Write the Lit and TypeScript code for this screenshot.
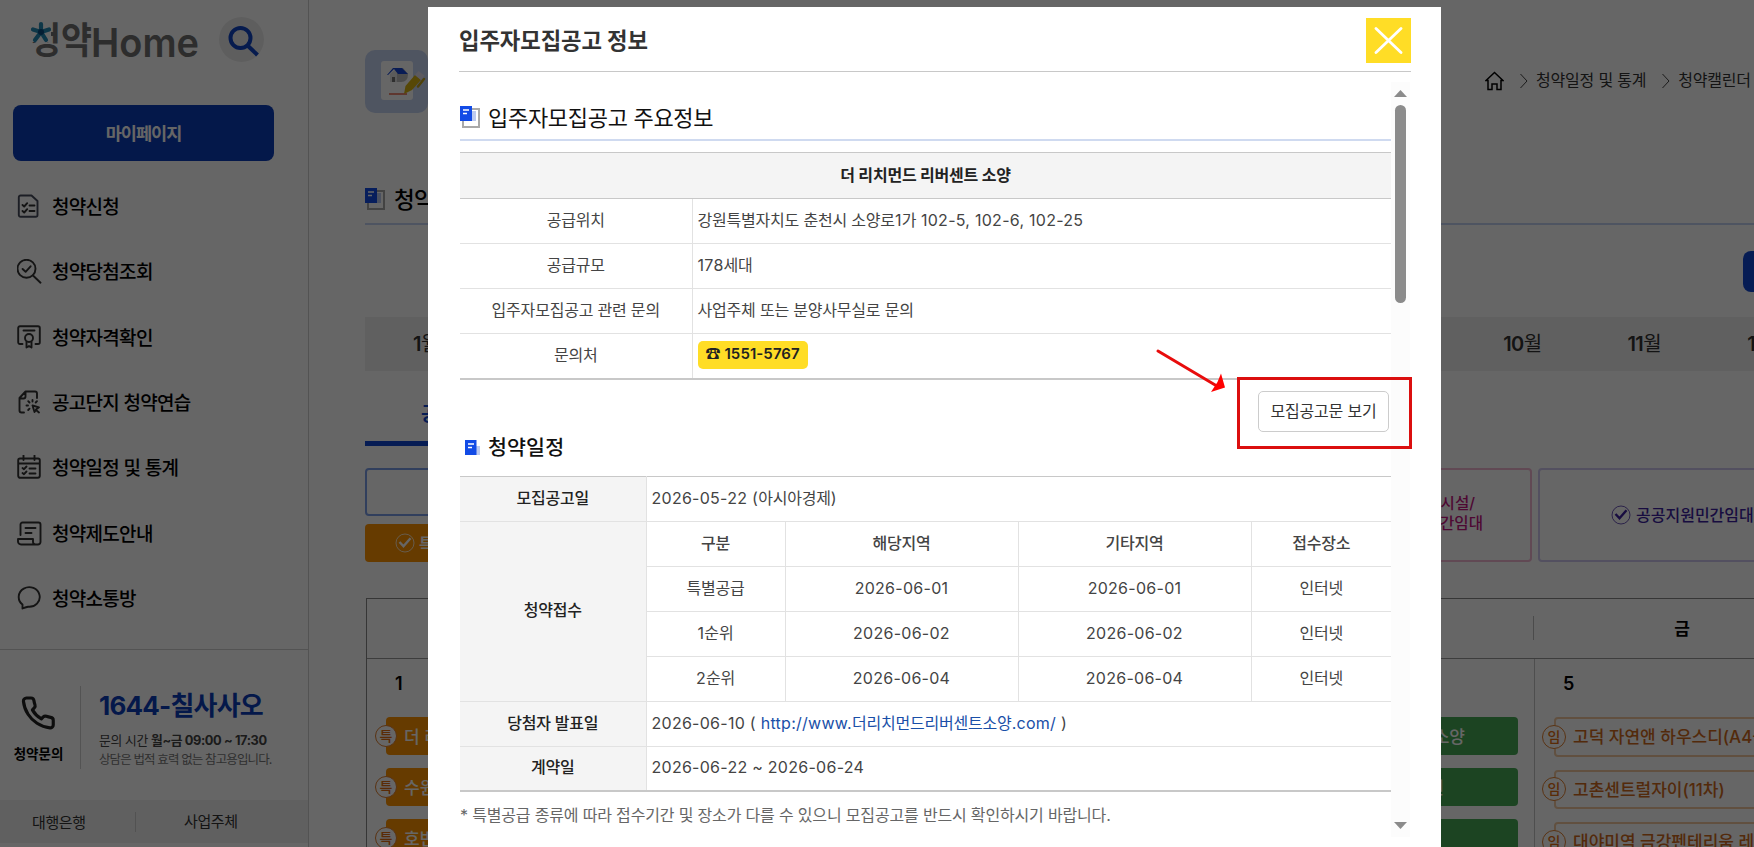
import { LitElement, html, css, svg, nothing } from "lit";
import { customElement } from "lit/decorators.js";

const base = css`
  * { box-sizing: border-box; }
  :host { font-family: Inter, "Noto Sans CJK KR", sans-serif; color: #000; }
  svg { display: block; flex: none; }
  .row { display: flex; align-items: center; }
`;

const sectionIcon = html`<svg width="20" height="22" viewBox="0 0 20 22">
  <rect x="3" y="3" width="16" height="18" fill="#fff" stroke="#a9a9a9" stroke-width="2" />
  <rect x="12" y="5" width="4" height="10" fill="#bccaf0" />
  <rect width="12" height="15" fill="#124be6" />
  <path d="M3 4h6M3 7.5h4" stroke="#fff" stroke-width="1.4" />
</svg>`;

const checkIcon = html`<svg width="20" height="20" viewBox="0 0 20 20" fill="none" stroke="currentColor">
  <circle cx="10" cy="10" r="9" stroke-width="1" opacity=".75" />
  <path d="M4.5 9l4 4.3 7-8" stroke-width="2.4" />
</svg>`;

// Latin and digit runs are tracked slightly wider than the Hangul around them.
const mixed = (text: string) =>
  text.split(/([\uac00-\ud7a3]+(?: [\uac00-\ud7a3]+)*)/).filter(Boolean).map((part) => (/[\uac00-\ud7a3]/.test(part) ? part : html`<span class="n">${part}</span>`));

const menuIcons = [
  svg`<path stroke="#474c5c" d="M4 1.500h10.500l6 5.500v14a1.800 1.800 0 0 1-1.800 1.800H3.600a1.800 1.800 0 0 1-1.800-1.800V3.300a1.800 1.800 0 0 1 1.800-1.800z"/><path d="M5.500 11l1.700 1.500 3-3.300M5.500 17l1.700 1.500 3-3.300M12.500 11.500h5M12.500 17h5"/>`,
  svg`<circle cx="9.500" cy="9.800" r="9"/><path d="M16 16.500l7.500 7.200M5.600 10l3 2.800 5-5.500"/>`,
  svg`<path d="M5.500 19H3a1.800 1.800 0 0 1-1.800-1.800V3A1.800 1.800 0 0 1 3 1.200h18A1.800 1.800 0 0 1 22.800 3v14.200A1.800 1.800 0 0 1 21 19h-2.500M6.500 5.500h11"/><circle cx="12" cy="13" r="4"/><path d="M9.500 17v5.500l2.500-1.500 2.500 1.500V17"/>`,
  svg`<path d="M7 22.500H4.500a2 2 0 0 1-2-2V8l6-6.500H18a2 2 0 0 1 2 2V8M2.500 8.500h4a2 2 0 0 0 2-2v-5"/><path d="M15.500 15.500l2 6.500 1.500-2 3 2.500M15.500 15.500l6.500 1.800-3 2.200" /><path d="M15.500 10v1.500M9.500 15.500H11M11.200 11.200l1.300 1.300M20 11.200l-1.300 1.300M11.200 20l1.300-1.300"/>`,
  svg`<path d="M3 3.500h18a1.800 1.800 0 0 1 1.800 1.800v15.500a2 2 0 0 1-2 2H3.200a2 2 0 0 1-2-2V5.300A1.800 1.800 0 0 1 3 3.500zM1.200 8.500h21.600M6.500 .5v4.500M17.500 .5v4.500"/><path d="M5.500 13l1.500 1.200 2.500-2.700M5.500 18l1.500 1.200 2.500-2.700M12.500 13.500h6M12.500 18.500h6"/>`,
  svg`<path d="M3.500 14V3.500a2 2 0 0 1 2-2h16a2 2 0 0 1 2 2v17.500a2.500 2.500 0 0 1-2.500 2.500H4a3 3 0 0 1-3-3V18h15v3a2.500 2.500 0 0 0 2.500 2.500M8.500 7h10M8.500 12h6"/>`,
  svg`<path d="M5.500 22.500v-4A10.500 9.800 0 1 1 11 20.700c-1.800.300-3.500.800-5.500 1.800z"/>`,
];
const menu = ["청약신청", "청약당첨조회", "청약자격확인", "공고단지 청약연습", "청약일정 및 통계", "청약제도안내", "청약소통방"];

@customElement("side-bar")
class SideBar extends LitElement {
  static styles = [base, css`
    :host { display: flex; flex-direction: column; width: 309px; height: 847px; flex: none; border-right: 1px solid #cfcfcf; background: #fff; }
    .brand { height: 105px; padding: 17px 0 0 30px; display: flex; align-items: flex-start; gap: 20px; }
    .search { width: 45px; height: 45px; border-radius: 50%; background: #ececec; padding: 9px; }
    .my { margin: 0 34px 0 13px; height: 56px; border-radius: 8px; background: #0a3cb9; color: #fff; display: flex; align-items: center; justify-content: center; font-size: 17.500px; font-weight: 700; letter-spacing: -1px; padding-bottom: 2px; }
    nav { padding: 13px 0 0 17px; height: 489px; border-bottom: 1px solid #cfcfcf; }
    .item { display: flex; align-items: center; height: 65.300px; gap: 10px; font-size: 19px; font-weight: 500; letter-spacing: -.7px; white-space: nowrap; }
    .item span { padding-bottom: 2px; }
    .item svg { stroke: #333; fill: none; stroke-width: 1.900; stroke-linecap: round; stroke-linejoin: round; }
    .call { display: flex; height: 150px; padding-top: 36px; }
    .who { width: 81px; height: 83px; border-right: 1px solid #d0d0d0; display: flex; flex-direction: column; align-items: center; padding: 9px 3px 0 0; font-size: 13.500px; font-weight: 700; line-height: 20px; gap: 13px; }
    .info { padding: 0 0 0 18px; white-space: nowrap; }
    .num { font-size: 26px; line-height: 38px; font-weight: 700; color: #0a3cb9; letter-spacing: -.800px; padding-top: 1px; }
    .time { font-size: 12.800px; line-height: 19px; color: #444; margin-top: 6px; letter-spacing: -.38px; }
    .tiny { font-size: 12.500px; line-height: 19px; color: #777; letter-spacing: -.88px; }
    .foot { background: #f0f0f0; height: 43px; display: flex; align-items: center; font-size: 15px; color: #333; letter-spacing: -.4px; }
    .foot span { flex: 1; padding-left: 32px; }
    .foot span + span { border-left: 1px solid #ccc; padding-left: 48px; flex: 0 0 173px; line-height: 20px; }
  `];
  render() {
    return html`
      <div class="brand">
        <svg width="169" height="45" viewBox="0 0 169 45">
          <g fill="#707070" font-family='Inter, "Noto Sans CJK KR", sans-serif'>
            <text x="0" y="37" font-size="37" font-weight="700" textLength="62" lengthAdjust="spacingAndGlyphs">청약</text>
            <text x="61" y="40" font-size="40" font-weight="600" textLength="108" lengthAdjust="spacingAndGlyphs">Home</text>
          </g>
          <rect x="0" y="0" width="21" height="25" fill="#fff" />
          <path d="M11 15V7M11 15L3 12.500M11 15l8-2.500M11 15l-6 8M11 15l5 8" stroke="#2489b4" stroke-width="4.200" stroke-linecap="round" />
          <circle cx="11" cy="15" r="3" fill="#0b4b80" />
        </svg>
        <div class="search"><svg width="31" height="31" viewBox="0 0 31 31" fill="none" stroke="#0f44c4" stroke-width="4"><circle cx="12.500" cy="12" r="10" /><path d="M19.500 19.500l10 9.500" /></svg></div>
      </div>
      <div class="my">마이페이지</div>
      <nav>${menu.map((t, i) => html`<div class="item"><svg width="25" height="25" viewBox="0 0 25 25">${menuIcons[i]}</svg><span>${t}</span></div>`)}</nav>
      <div class="call">
        <div class="who">
          <svg width="38" height="36" viewBox="0 0 25 24" fill="none" stroke="#222" stroke-width="2.100" stroke-linejoin="round"><path d="M22 16.920v3a2 2 0 0 1-2.180 2 19.790 19.790 0 0 1-8.630-3.070 19.500 19.500 0 0 1-6-6A19.790 19.790 0 0 1 2.120 4.180 2 2 0 0 1 4.110 2h3a2 2 0 0 1 2 1.720c.13.960.36 1.900.7 2.810a2 2 0 0 1-.45 2.110L8.090 9.910a16 16 0 0 0 6 6l1.270-1.270a2 2 0 0 1 2.110-.45c.91.340 1.850.570 2.810.7A2 2 0 0 1 22 16.920z" /></svg>
          <span>청약문의</span>
        </div>
        <div class="info">
          <div class="num">1644-칠사사오</div>
          <div class="time">문의 시간 <b>월~금 09:00 ~ 17:30</b></div>
          <div class="tiny">상담은 법적 효력 없는 참고용입니다.</div>
        </div>
      </div>
      <div class="foot"><span>대행은행</span><span>사업주체</span></div>`;
  }
}

const days: { day: string; date: string; kind: string; mark: string; items: string[] }[] = [
  { day: "월", date: "1", kind: "special", mark: "특", items: ["더 리치먼드 리버센트", "수원 당수", "호반써밋"] },
  { day: "화", date: "2", kind: "none", mark: "", items: [] },
  { day: "수", date: "3", kind: "none", mark: "", items: [] },
  { day: "목", date: "4", kind: "second", mark: "2", items: ["더 리치먼드 리버센트 소양", "수원 당수 파크원", ""] },
  { day: "금", date: "5", kind: "lease", mark: "임", items: ["고덕 자연앤 하우스디(A4블록)", "고촌센트럴자이(11차)", "대야미역 금강펜테리움 레이크"] },
];

@customElement("calendar-page")
class CalendarPage extends LitElement {
  static styles = [base, css`
    :host { display: block; flex: none; width: 1518px; padding-left: 56px; height: 847px; background: #fff; white-space: nowrap; }
    .top { height: 113px; padding-top: 50px; justify-content: space-between; align-items: flex-start; }
    .tile { width: 63px; height: 63px; border-radius: 10px; background: #c5d4f2; padding: 10px 0 0 13px; }
    .crumbs { padding-top: 17px; width: 342px; font-size: 16px; color: #333; letter-spacing: -.2px; line-height: 26px; }
    .crumbs span { padding-bottom: 1px; }
    .crumbs svg { margin-right: 16px; }
    .crumbs .chev { margin: 0 8px 0 0; }
    .crumbs span + .chev { margin-left: 16px; }
    h2 { margin: 64px 0 0; height: 48px; padding-bottom: 3px; border-bottom: 2px solid #c3d1f3; display: flex; align-items: center; gap: 9px; font-size: 22.500px; font-weight: 500; letter-spacing: -.8px; }
    h2 span { padding-bottom: 2px; }
    .tools { height: 92px; padding-top: 26px; }
    .tools i { display: block; width: 82px; height: 41px; margin-left: 1378px; border-radius: 8px; background: #1047d2; }
    .months { height: 54px; background: #f1f1f1; font-size: 20px; color: #333; padding-bottom: 3px; }
    .months span { flex: 1; text-align: center; letter-spacing: -.6px; }
    .months b { font-weight: 600; }
    .tab { width: 292px; height: 75px; border-bottom: 5px solid #1047d2; display: flex; align-items: center; padding: 12px 0 0 56px; font-size: 19px; font-weight: 700; color: #1047d2; }
    .legend { display: flex; margin-top: 22px; height: 94px; gap: 6px; font-size: 15.600px; font-weight: 500; }
    .left { width: 240px; flex: none; display: flex; flex-direction: column; gap: 8px; }
    .outline { height: 48px; border: 2px solid #7c9de8; border-radius: 4px; }
    .special { height: 38px; border-radius: 4px; background: #ff9400; color: #fff; display: flex; align-items: center; padding-left: 30px; gap: 4px; font-weight: 700; }
    .gap { width: 674px; flex: none; }
    .pink { width: 241px; flex: none; border: 2px solid #f3b6d2; border-radius: 4px; color: #c3157f; display: flex; flex-direction: column; justify-content: center; align-items: flex-end; line-height: 20px; padding: 0 47px 2px 0; letter-spacing: 0; }
    .pink span:first-child { padding-right: 8px; }
    .purple { flex: 1; border: 2px solid #cfc8f0; border-radius: 4px; color: #3c1fa0; display: flex; align-items: center; padding-left: 71px; gap: 5px; font-size: 16px; }
    .purple span { padding-bottom: 2px; }
    .cal { margin: 36px -2px 0 1px; height: 249px; border-top: 1px solid #888; border-left: 1px solid #888; display: grid; grid-template-columns: repeat(4, 292px) 1fr; overflow: hidden; }
    .col { position: relative; }
    .day { height: 60px; border-bottom: 1px solid #999; font-size: 17px; font-weight: 700; display: flex; align-items: center; justify-content: center; padding-bottom: 2px; }
    .day::after { content: ""; width: 1px; height: 24px; background: #bbb; position: absolute; right: 1px; top: 17px; }
    .body { border-right: 1px solid #c4c4c4; height: 200px; padding: 11px 16px 0 19px; }
    .date { font-size: 18px; font-weight: 600; line-height: 28px; padding-left: 9px; margin-bottom: 19px; }
    .ev { height: 38px; margin-bottom: 13px; border-radius: 4px; display: flex; align-items: center; font-size: 17px; font-weight: 500; letter-spacing: 0; color: #fff; }
    .ev .name { padding-bottom: 2px; }
    .mark { width: 22px; height: 22px; margin: 0 7px 0 -11px; border-radius: 50%; background: #fff; border: 1px solid #e08030; color: #e06c10; font-size: 14px; line-height: 19px; text-align: center; letter-spacing: 0; flex: none; }
    .special-ev { background: #ff9400; }
    .second-ev { background: #46aa55; justify-content: flex-end; padding-right: 53px; }
    .second-ev:nth-child(3) { padding-right: 74px; }
    .lease-ev { border: 2px solid #f3c9a0; color: #cf6a1c; height: 39.500px; margin-right: -20px; }
    .lease-ev .mark { width: 24px; height: 24px; margin-left: -14px; line-height: 21px; margin-right: 7px; }
  `];
  render() {
    return html`
      <div class="row top">
        <div class="tile"><svg width="50" height="44" viewBox="0 0 50 44">
          <rect x="3" y="1" width="32" height="39" rx="3" fill="#fff" />
          <path d="M12 14l7-6v14h-7z" fill="#e3e3e3" /><path d="M19 8h6l5 6q0 8-7 8h-4z" fill="#bdbdbd" />
          <path d="M9 15l6-7h9l6 6H20l-4-5-6 6z" fill="#1747d5" /><rect x="14" y="17" width="3" height="5" fill="#777" />
          <path d="M11 34h18" stroke="#e8654a" stroke-width="1.500" />
          <path d="M26 34l1.500-8L37 15l6 5-9 10z" fill="#d9b410" /><path d="M37 15l3.500-4 6 4.500-3.500 4.500z" fill="#e5e0ee" /><path d="M46 19l-6 7.500" stroke="#c2a21a" stroke-width="2.500" stroke-linecap="round" />
        </svg></div>
        <div class="row crumbs">
          <svg width="19" height="20" viewBox="0 0 19 20" fill="none" stroke="#000" stroke-width="1.500"><path d="M1 9.500L9.500 1.500 18 9.500H16V18.500H12V13H7v5.500H3V9.500z" /></svg>
          <svg class="chev" width="8" height="16" viewBox="0 0 8 16" fill="none" stroke="#444"><path d="M.5 1l6.500 7-6.500 7" /></svg><span>청약일정 및 통계</span>
          <svg class="chev" width="8" height="16" viewBox="0 0 8 16" fill="none" stroke="#444"><path d="M.5 1l6.500 7-6.500 7" /></svg><span>청약캘린더</span>
        </div>
      </div>
      <h2>${sectionIcon}<span>청약캘린더</span></h2>
      <div class="tools"><i></i></div>
      <div class="row months">${Array.from({ length: 12 }, (_, i) => html`<span><b>${i + 1}</b>월</span>`)}</div>
      <div class="tab">공고단지</div>
      <div class="legend">
        <div class="left"><div class="outline"></div><div class="special">${checkIcon}특별공급</div></div>
        <div class="gap"></div>
        <div class="pink"><span>생활숙박시설/</span><span>민간임대</span></div>
        <div class="purple">${checkIcon}<span>공공지원민간임대</span></div>
      </div>
      <div class="cal">${days.map((d) => html`<div class="col">
        <div class="day">${d.day}</div>
        <div class="body"><div class="date">${d.date}</div>
          ${d.items.map((t) => html`<div class="ev ${d.kind}-ev">${d.kind === "second" ? nothing : html`<span class="mark">${d.mark}</span>`}<span class="name">${t}</span></div>`)}
        </div></div>`)}</div>`;
  }
}

@customElement("notice-dialog")
class NoticeDialog extends LitElement {
  static styles = [base, css`
    :host { display: flex; flex-direction: column; width: 1013px; height: 840px; background: #fff; padding: 0 30px 0 31px; white-space: nowrap; }
    header { height: 65px; border-bottom: 1px solid #c8c8c8; display: flex; justify-content: space-between; align-items: center; font-size: 22.300px; font-weight: 700; letter-spacing: -.1px; color: #333; }
    .x { width: 45px; height: 45px; background: #ffdd26; padding: 9px 7px; margin-top: 3px; }
    .view { display: flex; margin-top: 10px; height: 755px; padding-left: 1px; }
    .content { width: 931px; }
    .bar { width: 19px; background: #fcfcfc; display: flex; flex-direction: column; align-items: center; padding: 8px 0; }
    .thumb { width: 11px; height: 198px; border-radius: 6px; background: #8b8b8b; margin: 8px 0 auto; }
    h3 { margin: 0; height: 59px; padding: 12px 0 0; border-bottom: 2px solid #cfdaf0; display: flex; align-items: center; gap: 8px; font-size: 22px; font-weight: 400; letter-spacing: -.3px; color: #111; }
    h3 span { padding-bottom: 2px; }
    table { border-collapse: collapse; table-layout: fixed; width: 931px; font-size: 16px; color: #444; border-top: 1px solid #c8c8c8; border-bottom: 2px solid #c8c8c8; }
    td, th { height: 45px; padding: 0 5px 2px; border: 1px solid #e2e2e2; font-weight: 400; text-align: center; line-height: 24px; letter-spacing: -.2px; }
    tr:first-child > * { border-top-color: #c8c8c8; }
    tr > :first-child { border-left: 0; }
    tr > :last-child { border-right: 0; }
    .l { text-align: left; }
    .n { letter-spacing: .27px; }
    .t1 { margin-top: 11px; }
    .t1 .cap { height: 46px; background: #f4f4f4; border-bottom: 1px solid #c8c8c8; font-weight: 700; color: #222; }
    .g { background: #f4f4f4; font-weight: 500; color: #222; }
    .tr th { font-weight: 500; }
    .tel { display: inline-block; height: 28px; line-height: 26px; border-radius: 5px; background: #ffdd26; padding: 0 8px; color: #222; font-size: 15px; font-weight: 600; letter-spacing: .08px; vertical-align: middle; }
    .act { display: flex; justify-content: flex-end; padding: 11px 2px 0 0; }
    .btn { width: 131px; height: 41px; border: 1px solid #ccc; border-radius: 5px; display: flex; align-items: center; justify-content: center; font-size: 16px; letter-spacing: -.2px; color: #333; padding-bottom: 2px; }
    h4 { margin: 0; height: 44px; padding: 0 0 13px 5px; display: flex; align-items: center; gap: 8px; font-size: 20.600px; font-weight: 500; color: #111; letter-spacing: .1px; }
    h4 span { padding-bottom: 2px; }
    a { color: #1a4fa8; }
    .note { margin: 12px 0 0; font-size: 16px; line-height: 22px; color: #666; letter-spacing: -.17px; }
  `];
  render() {
    const rounds = [["특별공급", "2026-06-01"], ["1순위", "2026-06-02"], ["2순위", "2026-06-04"]];
    return html`
      <header><span>입주자모집공고 정보</span><div class="x"><svg width="31" height="27" viewBox="0 0 31 27" stroke="#fff" stroke-width="2.800" stroke-linecap="round"><path d="M3 1.500l25 24M28 1.500L3 25.500" /></svg></div></header>
      <div class="view">
        <div class="content">
          <h3>${sectionIcon}<span>입주자모집공고 주요정보</span></h3>
          <table class="t1">
            <colgroup><col width="232" /><col /></colgroup>
            <tr><th class="cap" colspan="2">더 리치먼드 리버센트 소양</th></tr>
            <tr><td>공급위치</td><td class="l">${mixed("강원특별자치도 춘천시 소양로1가 102-5, 102-6, 102-25")}</td></tr>
            <tr><td>공급규모</td><td class="l">${mixed("178세대")}</td></tr>
            <tr><td>입주자모집공고 관련 문의</td><td class="l">사업주체 또는 분양사무실로 문의</td></tr>
            <tr><td>문의처</td><td class="l"><span class="tel">☎ 1551-5767</span></td></tr>
          </table>
          <div class="act"><div class="btn">모집공고문 보기</div></div>
          <h4><svg width="15" height="15" viewBox="0 0 15 15"><rect x="10" y="6" width="5" height="9" fill="#bccaf0" /><rect width="11.500" height="15" fill="#124be6" /><path d="M3 4h6M3 7.500h4" stroke="#fff" stroke-width="1.400" /></svg><span>청약일정</span></h4>
          <table>
            <colgroup><col width="186" /><col width="139" /><col width="233" /><col width="233" /><col width="140" /></colgroup>
            <tr><th class="g">모집공고일</th><td class="l" colspan="4">${mixed("2026-05-22 (아시아경제)")}</td></tr>
            <tr class="tr"><th class="g" rowspan="4">청약접수</th><th>구분</th><th>해당지역</th><th>기타지역</th><th>접수장소</th></tr>
            ${rounds.map(([n, d]) => html`<tr><td>${mixed(n)}</td><td>${mixed(d)}</td><td>${mixed(d)}</td><td>인터넷</td></tr>`)}
            <tr><th class="g">당첨자 발표일</th><td class="l" colspan="4">${mixed("2026-06-10 ( ")}<a>${mixed("http://www.더리치먼드리버센트소양.com/")}</a>${mixed(" )")}</td></tr>
            <tr><th class="g">계약일</th><td class="l" colspan="4">${mixed("2026-06-22 ~ 2026-06-24")}</td></tr>
          </table>
          <p class="note">* 특별공급 종류에 따라 접수기간 및 장소가 다를 수 있으니 모집공고를 반드시 확인하시기 바랍니다.</p>
        </div>
        <div class="bar">
          <svg width="13" height="7" viewBox="0 0 13 7"><path d="M0 7L6.500 0 13 7z" fill="#8b8b8b" /></svg>
          <div class="thumb"></div>
          <svg width="13" height="7" viewBox="0 0 13 7"><path d="M0 0h13L6.500 7z" fill="#8b8b8b" /></svg>
        </div>
      </div>`;
  }
}

@customElement("app-root")
class AppRoot extends LitElement {
  static styles = [base, css`
    :host { display: block; position: relative; width: 1754px; height: 847px; overflow: hidden; background: #fff; }
    .page { display: flex; }
    .dim { position: absolute; inset: 0; background: rgba(0, 0, 0, .6); padding: 7px 0 0 428px; }
    .callout { position: absolute; left: 1150px; top: 340px; }
  `];
  render() {
    return html`
      <div class="page"><side-bar></side-bar><calendar-page></calendar-page></div>
      <div class="dim"><notice-dialog></notice-dialog></div>
      <svg class="callout" width="270" height="115" viewBox="0 0 270 115">
        <rect x="88.500" y="38.500" width="172" height="69" fill="none" stroke="#db0f0f" stroke-width="3" />
        <path d="M8 11l58 34.500" stroke="#e80c0c" stroke-width="3" stroke-linecap="round" />
        <path d="M75 47.500L71 33.500l-3.500 8.500-6.500 10z" fill="#ff0000" />
      </svg>`;
  }
}
